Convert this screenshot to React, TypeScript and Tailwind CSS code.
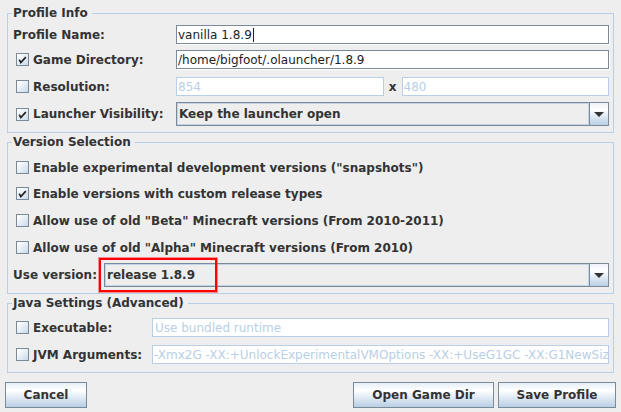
import React from 'react';

const Box = ({ checked }: { checked?: boolean }) => (
  <span className="flex h-[13px] w-[13px] shrink-0 items-center justify-center border border-[#7a8a99] bg-[linear-gradient(135deg,#ffffff_10%,#c9d9ea)]">
    {checked && (
      <svg width="11" height="11" viewBox="0 0 11 11">
        <path d="M2.2 5.6 L3.8 8.6 L8.8 3.2" fill="none" stroke="#222" strokeWidth="1.7" />
      </svg>
    )}
  </span>
);

const Field = ({
  value,
  disabled,
  caret,
  className = '',
}: {
  value: string;
  disabled?: boolean;
  caret?: boolean;
  className?: string;
}) => (
  <div
    className={`flex h-[19px] min-w-0 items-center overflow-hidden whitespace-nowrap bg-white pl-[1px] font-normal ${
      disabled
        ? 'border border-[#b8cfe5] text-[#b8cfe5]'
        : 'border border-[#7a8a99] text-[#222] shadow-[1px_1px_0_#ffffff]'
    } ${className}`}
  >
    <span>{value}</span>
    {caret && <span className="ml-[1px] h-[14px] w-px shrink-0 bg-[#222]" />}
  </div>
);

const Combo = ({ value, className = '' }: { value: string; className?: string }) => (
  <div className={`flex h-[24px] min-w-0 border border-[#7a8a99] bg-[#eeeeee] ${className}`}>
    <div className="flex flex-1 items-center pl-[2px] font-bold shadow-[inset_0_0_0_1px_#c3d4e6]">
      {value}
    </div>
    <div className="flex w-[19px] items-center justify-center border-l border-[#7a8a99] bg-[linear-gradient(to_bottom,#eef3f9,#ffffff_30%,#b8cfe5)]">
      <svg width="10" height="5" viewBox="0 0 10 5">
        <polygon points="0,0 10,0 5,5" fill="#333" />
      </svg>
    </div>
  </div>
);

const Group = ({
  title,
  className = '',
  children,
}: {
  title: string;
  className?: string;
  children: React.ReactNode;
}) => (
  <fieldset className={`mx-[2px] min-w-0 border border-[#b8cfe5] pr-[4px] ${className}`}>
    <legend className="ml-[4px] pl-[1px] pr-[4px] font-bold leading-[15px]">{title}</legend>
    {children}
  </fieldset>
);

const Button = ({ label, className = '' }: { label: string; className?: string }) => (
  <button className={`h-[26px] border border-[#7a8a99] bg-[linear-gradient(to_bottom,#e6eef6,#ffffff_30%,#b8cfe5)] font-bold text-[#333] ${className}`}>
    {label}
  </button>
);

const jvmArgs =
  '-Xmx2G -XX:+UnlockExperimentalVMOptions -XX:+UseG1GC -XX:G1NewSizePercent=20 -XX:G1ReservePercent=20 -XX:MaxGCPauseMillis=50 -XX:G1HeapRegionSize=32M';

export default function App() {
  return (
    <div className="h-[412px] w-[621px] overflow-hidden bg-[#eeeeee] px-[5px] pt-[6px] font-['DejaVu_Sans',sans-serif] text-[12px] text-[#333]">
      <Group title="Profile Info" className="pb-[6px]">
        <div className="mt-[4px] flex h-[19px] items-center">
          <div className="w-[168px] shrink-0 pl-[5px] font-bold">Profile Name:</div>
          <Field value="vanilla 1.8.9" caret className="flex-1" />
        </div>
        <div className="mt-[6px] flex h-[19px] items-center">
          <div className="flex w-[168px] shrink-0 items-center gap-[4px] pl-[8px] font-bold">
            <Box checked />
            Game Directory:
          </div>
          <Field value="/home/bigfoot/.olauncher/1.8.9" className="flex-1" />
        </div>
        <div className="mt-[8px] flex h-[19px] items-center">
          <div className="flex w-[168px] shrink-0 items-center gap-[4px] pl-[8px] font-bold">
            <Box />
            Resolution:
          </div>
          <Field value="854" disabled className="flex-1" />
          <div className="w-[18px] shrink-0 text-center font-bold">x</div>
          <Field value="480" disabled className="flex-1" />
        </div>
        <div className="mt-[6px] flex h-[24px] items-center">
          <div className="flex w-[168px] shrink-0 items-center gap-[4px] pl-[8px] font-bold">
            <Box checked />
            Launcher Visibility:
          </div>
          <Combo value="Keep the launcher open" className="flex-1" />
        </div>
      </Group>

      <Group title="Version Selection" className="mt-[2px] pb-[6px]">
        {[
          { label: 'Enable experimental development versions ("snapshots")', on: false, mt: 'mt-[11px]' },
          { label: 'Enable versions with custom release types', on: true, mt: 'mt-[13px]' },
          { label: 'Allow use of old "Beta" Minecraft versions (From 2010-2011)', on: false, mt: 'mt-[14px]' },
          { label: 'Allow use of old "Alpha" Minecraft versions (From 2010)', on: false, mt: 'mt-[14px]' },
        ].map((r) => (
          <div key={r.label} className={`${r.mt} flex h-[13px] items-center gap-[4px] pl-[8px] font-bold whitespace-nowrap`}>
            <Box checked={r.on} />
            {r.label}
          </div>
        ))}
        <div className="relative mt-[9px] flex h-[24px] items-center">
          <div className="w-[96px] shrink-0 pl-[5px] font-bold">Use version:</div>
          <Combo value="release 1.8.9" className="flex-1" />
          <div className="absolute left-[91px] top-[-5px] h-[34px] w-[118px] border-2 border-[#ff0000] shadow-[0_0_0_1px_rgba(255,0,0,0.4)]" />
        </div>
      </Group>

      <Group title="Java Settings (Advanced)" className="mt-[2px] pb-[8px]">
        <div className="mt-[7px] flex h-[19px] items-center">
          <div className="flex w-[144px] shrink-0 items-center gap-[4px] pl-[8px] font-bold">
            <Box />
            Executable:
          </div>
          <Field value="Use bundled runtime" disabled className="flex-1 pl-[2px]" />
        </div>
        <div className="mt-[8px] flex h-[19px] items-center">
          <div className="flex w-[144px] shrink-0 items-center gap-[4px] pl-[8px] font-bold">
            <Box />
            JVM Arguments:
          </div>
          <Field value={jvmArgs} disabled className="flex-1" />
        </div>
      </Group>

      <div className="mt-[9px] flex">
        <Button label="Cancel" className="w-[82px]" />
        <Button label="Open Game Dir" className="ml-auto w-[141px]" />
        <Button label="Save Profile" className="ml-[4px] w-[118px]" />
      </div>
    </div>
  );
}
